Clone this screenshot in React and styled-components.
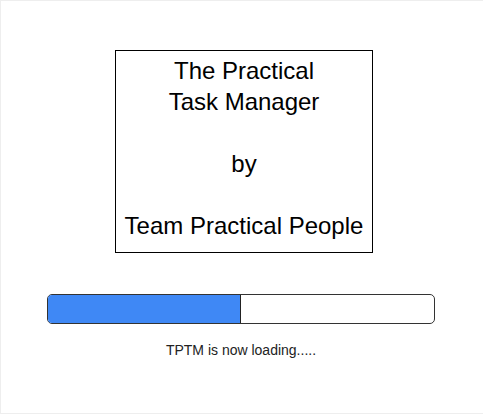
import React from "react";
import styled, { createGlobalStyle } from "styled-components";

const Global = createGlobalStyle`
  html, body { margin: 0; padding: 0; background: #fff; overflow: hidden; }
  body { font-family: "Liberation Sans", Arial, sans-serif; }
`;

const Frame = styled.div`
  box-sizing: border-box;
  width: 485px;
  height: 414px;
  border: 1px solid #eeeeee;
  display: flex;
  flex-direction: column;
  align-items: flex-start;
`;

const TitleBox = styled.div`
  box-sizing: border-box;
  margin: 49px 0 0 114px;
  width: 258px;
  height: 203px;
  border: 1px solid #000;
  padding-top: 4px;
  font-size: 24px;
  line-height: 31px;
  text-align: center;
  color: #000;
`;

const Line = styled.div`
  height: 31px;
`;

const Bar = styled.div`
  box-sizing: border-box;
  margin: 41px 0 0 46px;
  width: 388px;
  height: 30px;
  border: 1px solid #333;
  border-radius: 5px;
  overflow: hidden;
  display: flex;
`;

const Fill = styled.div`
  box-sizing: border-box;
  height: 100%;
  background: #3f88f5;
  border-right: 1px solid #222;
`;

const Status = styled.div`
  margin: 18px 0 0 46px;
  width: 388px;
  text-align: center;
  font-size: 14px;
  line-height: 16px;
  color: #222;
`;

export default function App() {
  const progress = 0.5;
  return (
    <>
      <Global />
      <Frame>
        <TitleBox>
          <Line>The Practical</Line>
          <Line>Task Manager</Line>
          <Line />
          <Line>by</Line>
          <Line />
          <Line>Team Practical People</Line>
        </TitleBox>
        <Bar>
          <Fill style={{ width: `${progress * 100}%` }} />
        </Bar>
        <Status>TPTM is now loading.....</Status>
      </Frame>
    </>
  );
}
